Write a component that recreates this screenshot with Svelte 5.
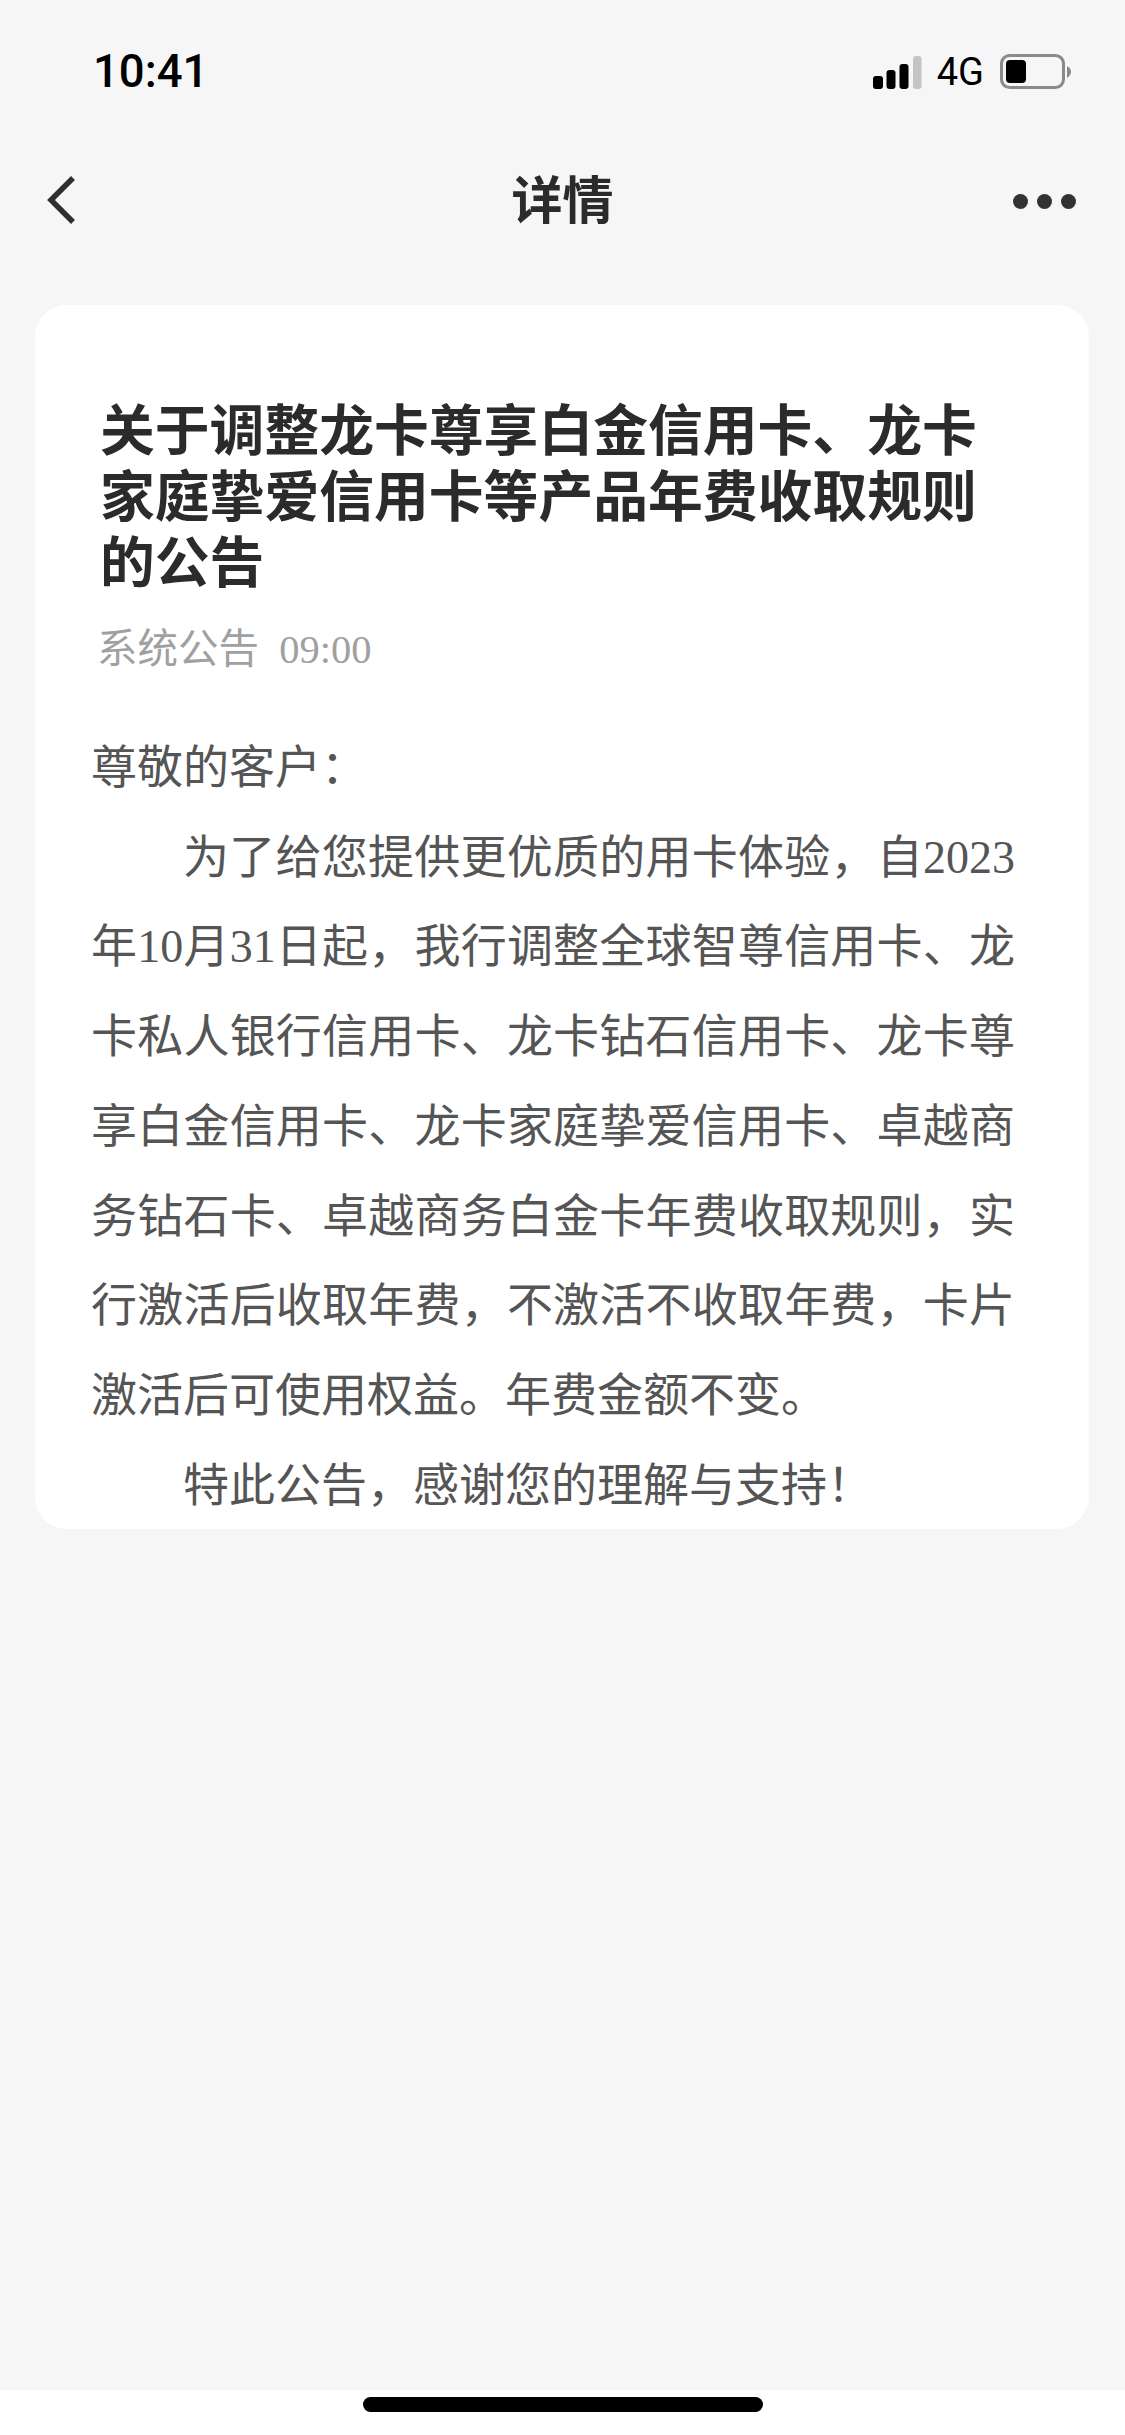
<script>
  const titleText = '关于调整龙卡尊享白金信用卡、龙卡家庭挚爱信用卡等产品年费收取规则的公告';
</script>

<div class="page">
  <div class="main">
    <div class="status">
      <span class="time">10:41</span>
      <div class="indicators">
        <svg class="signal" width="49" height="33" viewBox="0 0 49 33">
          <rect x="0" y="20" width="10" height="13" rx="3" fill="#000"/>
          <rect x="13.5" y="14" width="9" height="19" rx="3" fill="#000"/>
          <rect x="26.5" y="8" width="9" height="25" rx="3" fill="#000"/>
          <rect x="40" y="0" width="8.5" height="33" rx="3" fill="#c4c4c4"/>
        </svg>
        <span class="net">4G</span>
        <svg class="battery" width="72" height="36" viewBox="0 0 72 36">
          <rect x="1.5" y="1.5" width="62" height="32" rx="8" fill="none" stroke="#8a8a8a" stroke-width="3"/>
          <rect x="6" y="6" width="20" height="23" rx="4" fill="#000"/>
          <path d="M67 12 Q71 14 71 18 Q71 21 67 24 Z" fill="#8a8a8a"/>
        </svg>
      </div>
    </div>
    <div class="nav">
      <svg class="back" width="34" height="48" viewBox="0 0 34 48">
        <path d="M29 2 L7 24 L29 46" fill="none" stroke="#2f2f2f" stroke-width="5.5"/>
      </svg>
      <span class="nav-title">详情</span>
      <div class="dots"><i></i><i></i><i></i></div>
    </div>
    <div class="card">
      <h1>{titleText}</h1>
      <div class="meta">系统公告&nbsp;&nbsp;09:00</div>
      <div class="body">
        <p>尊敬的客户&#xFF1A;</p>
        <p class="in">为了给您提供更优质的用卡体验&#xFF0C;自2023年10月31日起&#xFF0C;我行调整全球智尊信用卡、龙卡私人银行信用卡、龙卡钻石信用卡、龙卡尊享白金信用卡、龙卡家庭挚爱信用卡、卓越商务钻石卡、卓越商务白金卡年费收取规则&#xFF0C;实行激活后收取年费&#xFF0C;不激活不收取年费&#xFF0C;卡片激活后可使用权益。年费金额不变。</p>
        <p class="in">特此公告&#xFF0C;感谢您的理解与支持&#xFF01;</p>
      </div>
    </div>
  </div>
  <div class="home"><span></span></div>
</div>

<style>
  :global(body) { margin: 0; background: #fff; }
  .page {
    width: 1125px;
    height: 2435px;
    display: flex;
    flex-direction: column;
    overflow: hidden;
  }
  .main {
    height: 2390px;
    background: #f6f6f6;
    flex: none;
  }
  .status {
    height: 142px;
    box-sizing: border-box;
    padding: 44px 53px 0 93px;
    display: flex;
    justify-content: space-between;
    align-items: flex-start;
  }
  .time {
    font: 500 45.5px/56px Roboto, sans-serif;
    color: #000;
  }
  .indicators {
    display: flex;
    align-items: center;
    height: 56px;
  }
  .signal { margin-right: 15px; }
  .net {
    font: 400 38px/56px Roboto, sans-serif;
    color: #000;
    margin-right: 16px;
  }
  .nav {
    height: 116px;
    padding: 0 49px 0 44px;
    display: flex;
    align-items: center;
    justify-content: space-between;
    position: relative;
  }
  .nav-title {
    position: absolute;
    left: 0;
    right: 0;
    top: 25px;
    text-align: center;
    font: 700 51px/60px "Noto Sans CJK SC", sans-serif;
    color: #2b2b2b;
  }
  .dots { display: flex; gap: 9px; margin-top: 2px; }
  .dots i {
    width: 15px;
    height: 15px;
    border-radius: 50%;
    background: #333;
  }
  .card {
    margin: 47px 36px 0 35px;
    height: 1224px;
    box-sizing: border-box;
    background: #fff;
    border-radius: 32px;
    padding: 88px 74px 0 56px;
    overflow: hidden;
  }
  h1 {
    margin: 0 0 0 9px;
    font: 700 54.8px/66px "Noto Sans CJK SC", sans-serif;
    color: #2b2b2b;
  }
  .meta {
    margin: 29px 0 0 6px;
    font: 400 40.5px/60px "Liberation Serif", "Noto Sans CJK SC", serif;
    color: #a0a0a0;
  }
  .body {
    margin-top: 43px;
    font: 400 46px/89.7px "Liberation Serif", "Noto Sans CJK SC", serif;
    color: #555;
    text-align: justify;
  }
  p { margin: 0; }
  .in { text-indent: 92px; }
  .home {
    flex: 1;
    display: flex;
    justify-content: center;
    padding-top: 7px;
  }
  .home span {
    width: 400px;
    height: 15px;
    border-radius: 8px;
    background: #000;
  }
</style>
